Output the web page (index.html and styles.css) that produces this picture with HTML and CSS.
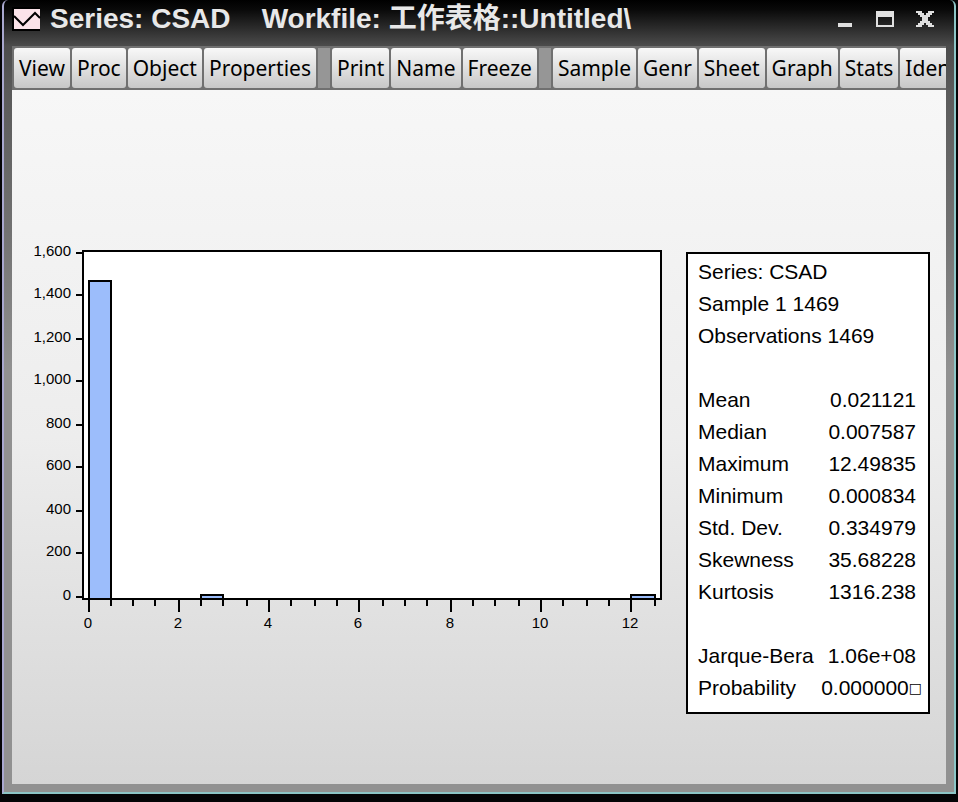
FILE: index.html
```
<!DOCTYPE html>
<html lang="en">
<head>
    <meta charset="UTF-8">
    <meta name="viewport" content="width=device-width, initial-scale=1.0">
    <title>Series: CSAD</title>
    <link rel="stylesheet" href="styles.css">
</head>
<body>

    <div class="window">
        <header class="titlebar">
            <svg class="app-icon" width="30" height="24" viewBox="0 0 30 24">
                <rect width="28" height="24" fill="#000"/>
                <rect x="2" y="2" width="26" height="20" fill="#fbe3e9"/>
                <path d="M2 9L11 18L23 6L28 11" fill="none" stroke="#000" stroke-width="2"/>
            </svg>
            <h1 class="title">Series: CSAD    Workfile: 工作表格::Untitled\</h1>
            <div class="controls">
                <button type="button" aria-label="Minimize">
                    <svg width="20" height="16" viewBox="0 0 20 16"><path d="M3 12h14v4H3z"/></svg>
                </button>
                <button type="button" aria-label="Maximize">
                    <svg width="20" height="16" viewBox="0 0 20 16"><path fill-rule="evenodd" d="M1 0h18v16H1zM3 6v8h14V6z"/></svg>
                </button>
                <button type="button" aria-label="Close">
                    <svg width="20" height="16" viewBox="0 0 20 16"><path d="M1 0h6v2h2v2h2V2h2V0h6v2h-2v2h-2v2h-2v4h2v2h2v2h2v2h-6v-2h-2v-2H9v2H7v2H1v-2h2v-2h2v-2h2V6H5V4H3V2H1z"/></svg>
                </button>
            </div>
        </header>

        <nav class="toolbar">
            <div class="group">
                <button type="button">View</button>
                <button type="button">Proc</button>
                <button type="button">Object</button>
                <button type="button">Properties</button>
            </div>
            <div class="group">
                <button type="button">Print</button>
                <button type="button">Name</button>
                <button type="button">Freeze</button>
            </div>
            <div class="group">
                <button type="button">Sample</button>
                <button type="button">Genr</button>
                <button type="button">Sheet</button>
                <button type="button">Graph</button>
                <button type="button">Stats</button>
                <button type="button">Ident</button>
            </div>
        </nav>

        <main class="content">
            <svg class="chart" viewBox="0 0 634 396" role="img" aria-label="Histogram of CSAD">
                <rect class="plot" x="55" y="11" width="578" height="348"/>

                <!-- bars -->
                <g class="bars">
                    <rect x="61" y="41" width="22" height="318"/>
                    <rect x="173" y="355" width="22" height="4"/>
                    <rect x="603" y="355" width="24" height="4"/>
                </g>

                <!-- ticks -->
                <path class="axis" d="M48 13h6M48 55h6M48 99h6M48 141h6M48 185h6M48 227h6M48 271h6M48 313h6M48 357h6"/>
                <path class="axis" d="M61 360v12M151 360v12M241 360v12M331 360v12M423 360v12M513 360v12M603 360v12"/>
                <path class="axis" d="M83 360v6M105 360v6M127 360v6M173 360v6M195 360v6M219 360v6M263 360v6M287 360v6M309 360v6M355 360v6M377 360v6M399 360v6M445 360v6M467 360v6M491 360v6M535 360v6M559 360v6M581 360v6M627 360v6"/>

                <g class="labels-y">
                    <text x="43" y="16">1,600</text>
                    <text x="43" y="58">1,400</text>
                    <text x="43" y="102">1,200</text>
                    <text x="43" y="144">1,000</text>
                    <text x="43" y="188">800</text>
                    <text x="43" y="230">600</text>
                    <text x="43" y="274">400</text>
                    <text x="43" y="316">200</text>
                    <text x="43" y="360">0</text>
                </g>
                <g class="labels-x">
                    <text x="60" y="388">0</text>
                    <text x="150" y="388">2</text>
                    <text x="240" y="388">4</text>
                    <text x="330" y="388">6</text>
                    <text x="422" y="388">8</text>
                    <text x="512" y="388">10</text>
                    <text x="602" y="388">12</text>
                </g>
            </svg>

            <section class="stats">
                <p>Series: CSAD</p>
                <p>Sample 1 1469</p>
                <p>Observations 1469</p>
                <table>
                    <tbody>
                        <tr><th scope="row">Mean</th><td>0.021121</td></tr>
                        <tr><th scope="row">Median</th><td>0.007587</td></tr>
                        <tr><th scope="row">Maximum</th><td>12.49835</td></tr>
                        <tr><th scope="row">Minimum</th><td>0.000834</td></tr>
                        <tr><th scope="row">Std. Dev.</th><td>0.334979</td></tr>
                        <tr><th scope="row">Skewness</th><td>35.68228</td></tr>
                        <tr><th scope="row">Kurtosis</th><td>1316.238</td></tr>
                    </tbody>
                </table>
                <table>
                    <tbody>
                        <tr><th scope="row">Jarque-Bera</th><td>1.06e+08</td></tr>
                        <tr><th scope="row">Probability</th><td class="wide">0.000000<span class="mark">□</span></td></tr>
                    </tbody>
                </table>
            </section>
        </main>
    </div>

</body>
</html>
```
FILE: styles.css
```
* {
    margin: 0;
    padding: 0;
    box-sizing: border-box;
}

body {
    height: 100vh;
    padding: 0 2px 8px;
    background-color: #040406;
    font-family: "Liberation Sans", "Noto Sans CJK SC", sans-serif;
    color: #000;
}

.window {
    display: flex;
    flex-direction: column;
    min-height: 100%;
    padding: 0 8px 8px;
    border-left: 2px solid #a9a8cf;
    border-right: 2px solid #8cc5c6;
    border-bottom: 2px solid #8cc5c6;
    border-radius: 6px 6px 0 0;
    background: linear-gradient(#000 0, #0a0a0a 10px, #4c4c4c 46px, #5a5a5a 90px, #727272 230px, #919191 370px);
}

/* title bar */
.titlebar {
    display: flex;
    align-items: center;
    height: 46px;
    padding-bottom: 8px;
}

.app-icon {
    flex: none;
    margin-right: 8px;
}

.title {
    flex: 1;
    font-size: 28px;
    line-height: 36px;
    color: #e8e8e8;
    white-space: pre;
    overflow: hidden;
}

.controls {
    display: flex;
    gap: 20px;
    padding-right: 11px;
}

.controls button {
    display: flex;
    border: 0;
    background: none;
}

.controls svg {
    fill: #e0e0e0;
    shape-rendering: crispEdges;
}

/* toolbar */
.toolbar {
    display: flex;
    gap: 12px;
    height: 44px;
    border: 2px solid #707070;
    border-width: 2px 0;
    background-color: #969696;
    overflow: hidden;
}

.group {
    display: flex;
    flex: none;
    gap: 2px;
    padding: 0 2px;
    background-color: #707070;
}

.group button {
    padding: 0 5px;
    border: 0;
    border-radius: 3px;
    background: linear-gradient(#f8f8f8, #c8c8c8);
    font-family: "Noto Sans", sans-serif;
    font-size: 21px;
    color: #000;
}

/* content */
.content {
    display: flex;
    flex: 1;
    align-items: flex-start;
    gap: 24px;
    padding: 150px 16px 60px;
    background: linear-gradient(#f7f7f7, #ededed 50%, #d5d5d5);
}

.chart {
    flex: 1;
    min-width: 0;
    font-size: 15px;
}

.plot {
    fill: #fff;
    stroke: #000;
    stroke-width: 2;
}

.bars rect {
    fill: #9cbdfb;
    stroke: #000;
    stroke-width: 2;
}

.axis {
    stroke: #000;
    stroke-width: 2;
}

.labels-y {
    text-anchor: end;
}

.labels-x {
    text-anchor: middle;
}

.stats {
    flex: none;
    width: 244px;
    margin-top: 12px;
    padding: 2px 0 8px 10px;
    border: 2px solid #000;
    background-color: #fff;
    font-size: 21px;
    line-height: 32px;
}

.stats table {
    width: 100%;
    margin-top: 32px;
    border-collapse: collapse;
}

.stats th {
    font-weight: normal;
    text-align: left;
}

.stats td {
    padding-right: 12px;
    text-align: right;
}

.stats td.wide {
    padding-right: 6px;
}

.mark {
    font-family: "DejaVu Sans", sans-serif;
    font-size: 14px;
    font-weight: bold;
    line-height: 1;
    vertical-align: 2px;
}
```
